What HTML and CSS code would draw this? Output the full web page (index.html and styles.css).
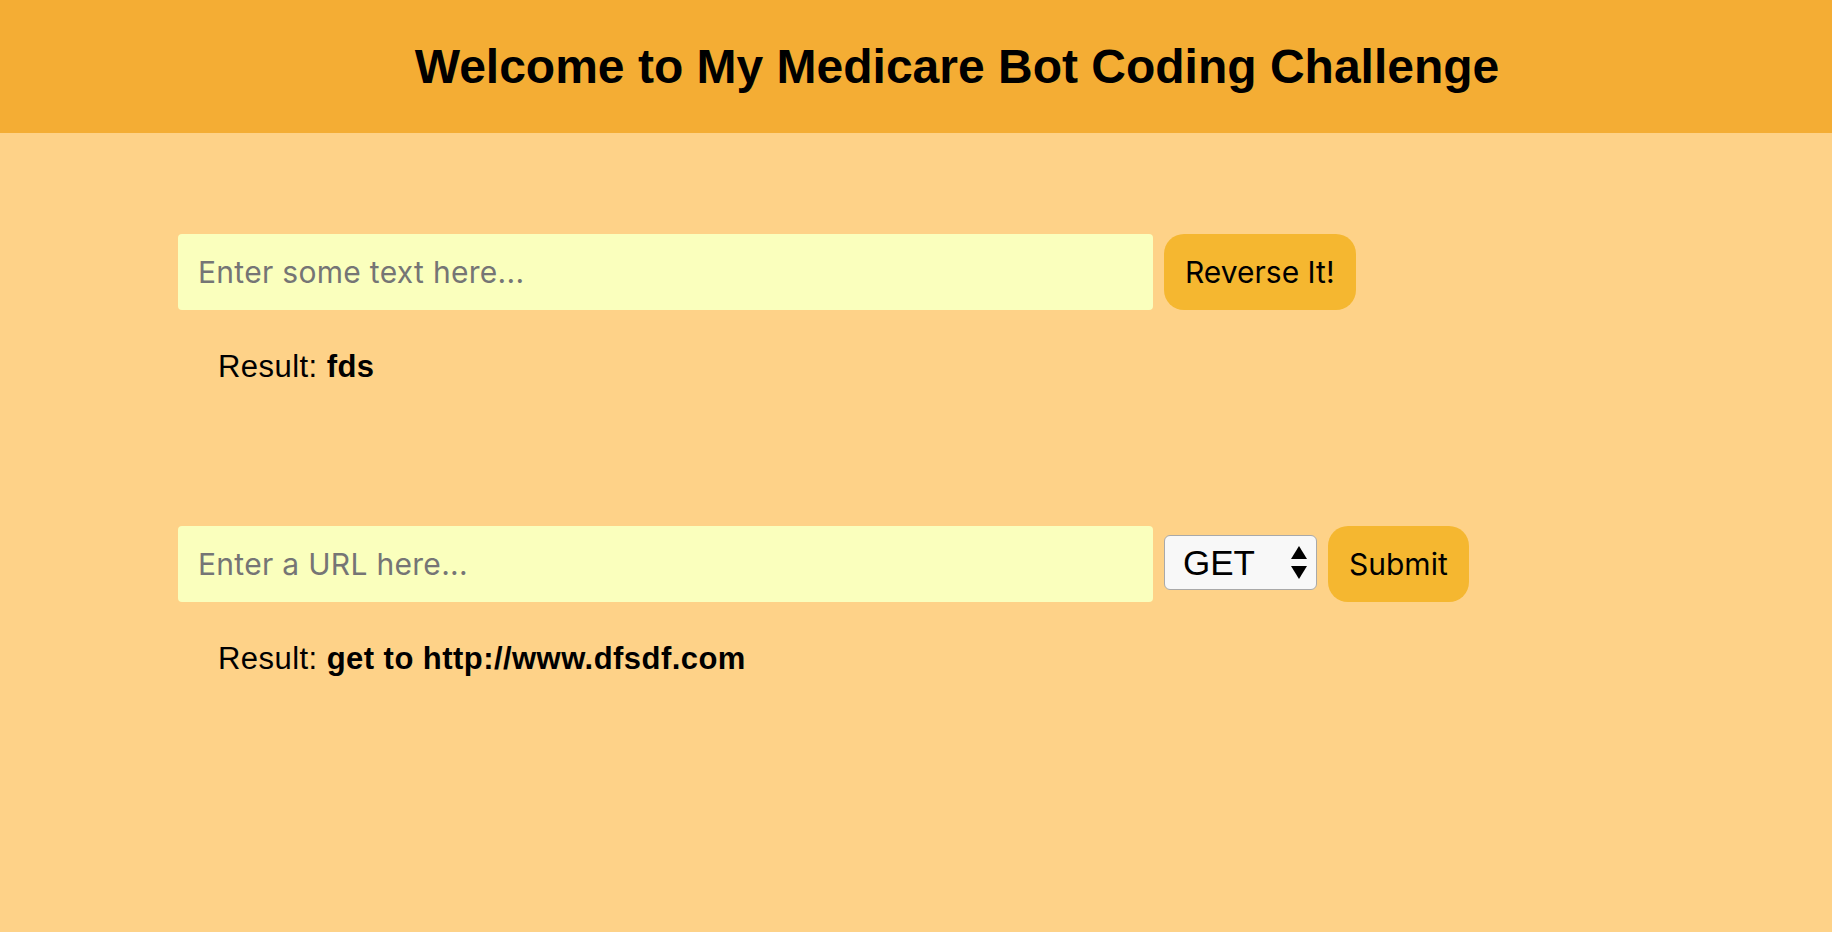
FILE: index.html
```html
<!DOCTYPE html>
<html lang="en">
<head>
<meta charset="utf-8">
<title>My Medicare Bot Coding Challenge</title>
<link rel="stylesheet" href="styles.css">
</head>
<body>
<header class="top-bar">
  <h1 class="title">Welcome to My Medicare Bot Coding Challenge</h1>
</header>
<main class="content">
  <section class="challenge">
    <form class="row">
      <input class="field" type="text" placeholder="Enter some text here...">
      <button class="action" type="button">Reverse It!</button>
    </form>
    <p class="result">Result: <strong>fds</strong></p>
  </section>
  <section class="challenge challenge-second">
    <form class="row">
      <input class="field" type="text" placeholder="Enter a URL here...">
      <span class="select-wrap">
        <select class="method">
          <option>GET</option>
          <option>POST</option>
        </select>
        <svg class="select-arrows" width="16" height="33" viewBox="0 0 16 33" aria-hidden="true">
          <polygon points="8,0 16,13 0,13" fill="#000"/>
          <polygon points="0,20 16,20 8,33" fill="#000"/>
        </svg>
      </span>
      <button class="action" type="button">Submit</button>
    </form>
    <p class="result">Result: <strong>get to http://www.dfsdf.com</strong></p>
  </section>
</main>
</body>
</html>
```

FILE: styles.css
```css
html, body {
  margin: 0;
  padding: 0;
}

body {
  background: #fed288;
  font-family: "Liberation Sans", Arial, sans-serif;
  color: #000;
  min-height: 932px;
}

.top-bar {
  background: #f4ad34;
  height: 133px;
  display: flex;
  align-items: center;
  justify-content: center;
  padding-left: 82px;
  box-sizing: border-box;
}

.title {
  margin: 0;
  font-family: "Liberation Sans", Arial, sans-serif;
  font-weight: bold;
  font-size: 48px;
  line-height: 55px;
}

.content {
  padding: 101px 0 0 178px;
}

.challenge-second {
  margin-top: 142px;
}

.row {
  display: flex;
  align-items: baseline;
  gap: 11px;
  margin: 0;
}

.field {
  width: 975px;
  height: 76px;
  box-sizing: border-box;
  border: none;
  border-radius: 4px;
  background: #faffbd;
  padding: 0 20px;
  font-family: "Inter", "Roboto", sans-serif;
  font-size: 30px;
  letter-spacing: 0.3px;
  color: #000;
  outline: none;
}

.field::placeholder {
  color: #757575;
}

.action {
  height: 76px;
  box-sizing: border-box;
  border: none;
  border-radius: 20px;
  background: #f5b730;
  padding: 0 21px;
  font-family: "Inter", "Roboto", sans-serif;
  font-size: 30px;
  color: #000;
  cursor: pointer;
}

.select-wrap {
  position: relative;
  display: inline-block;
}

.method {
  appearance: none;
  -webkit-appearance: none;
  width: 153px;
  height: 55px;
  box-sizing: border-box;
  border: 1px solid #a9a9a9;
  border-radius: 6px;
  background: #f8f8f8;
  padding: 0 0 0 18px;
  font-family: "Liberation Sans", Arial, sans-serif;
  font-size: 35px;
  color: #000;
}

.select-arrows {
  position: absolute;
  right: 10px;
  top: 11px;
  pointer-events: none;
}

.result {
  margin: 40px 0 0 40px;
  font-size: 31px;
  letter-spacing: 0.45px;
  line-height: 34px;
}

.result strong {
  font-weight: bold;
}
```
